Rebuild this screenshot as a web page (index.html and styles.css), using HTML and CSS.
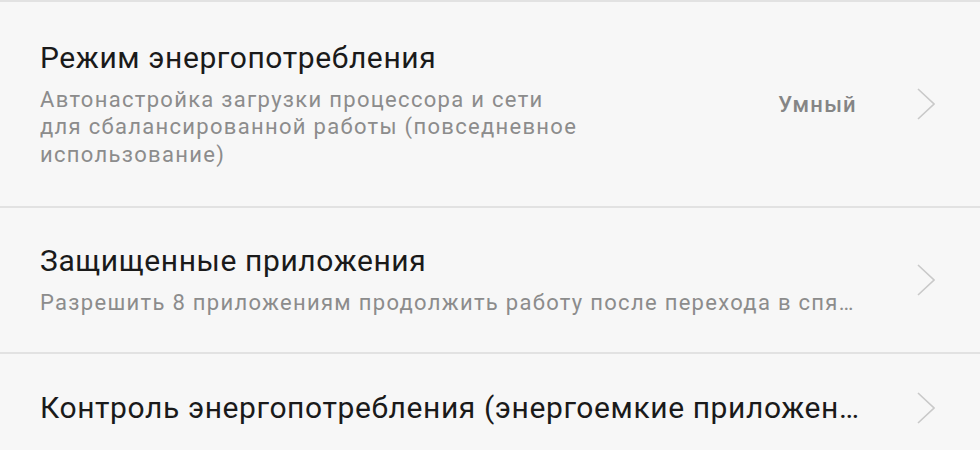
FILE: index.html
```html
<!DOCTYPE html>
<html lang="ru">
<head>
    <meta charset="UTF-8">
    <meta name="viewport" content="width=device-width, initial-scale=1.0">
    <title>Батарея</title>
    <link rel="stylesheet" href="styles.css">
</head>
<body>
    <div class="settings-list">
        <div class="item item-tall">
            <div class="item-text">
                <div class="item-title">Режим энергопотребления</div>
                <div class="item-summary summary-wrap">Автонастройка загрузки процессора и сети для сбалансированной работы (повседневное использование)</div>
            </div>
            <div class="item-value">Умный</div>
            <svg class="chevron" width="18" height="32" viewBox="0 0 18 32">
                <polyline points="1,1 17,16 1,31" fill="none" stroke="#c9c9c9" stroke-width="1.6"/>
            </svg>
        </div>

        <div class="item">
            <div class="item-text">
                <div class="item-title">Защищенные приложения</div>
                <div class="item-summary">Разрешить 8 приложениям продолжить работу после перехода в спящий режим</div>
            </div>
            <svg class="chevron" width="18" height="32" viewBox="0 0 18 32">
                <polyline points="1,1 17,16 1,31" fill="none" stroke="#c9c9c9" stroke-width="1.6"/>
            </svg>
        </div>

        <div class="item item-last">
            <div class="item-text">
                <div class="item-title">Контроль энергопотребления (энергоемкие приложения)</div>
            </div>
            <svg class="chevron" width="18" height="32" viewBox="0 0 18 32">
                <polyline points="1,1 17,16 1,31" fill="none" stroke="#c9c9c9" stroke-width="1.6"/>
            </svg>
        </div>
    </div>
</body>
</html>
```

FILE: styles.css
```css
body {
    margin: 0;
    background-color: #f7f7f7;
    font-family: Roboto, "Noto Sans", sans-serif;
    overflow: hidden;
}

.settings-list {
    border-top: 2px solid #e2e2e2;
}

.item {
    display: flex;
    align-items: center;
    padding: 0 45px 0 40px;
    height: 144px;
    border-bottom: 2px solid #e2e2e2;
}

.item-tall {
    height: 204px;
}

.item-last {
    height: 108px;
    border-bottom: none;
}

.item-text {
    flex: 1;
    min-width: 0;
    margin-right: 57px;
}

.item-title {
    font-size: 30px;
    letter-spacing: 0.6px;
    color: #1a1a1a;
    line-height: 36px;
    white-space: nowrap;
    overflow: hidden;
    text-overflow: ellipsis;
}

.item-summary {
    margin-top: 10px;
    font-size: 22px;
    letter-spacing: 1.3px;
    line-height: 27.5px;
    color: #8c8c8c;
    white-space: nowrap;
    overflow: hidden;
    text-overflow: ellipsis;
}

.summary-wrap {
    white-space: normal;
    max-width: 552px;
}

.item-value {
    font-size: 22px;
    font-weight: 500;
    letter-spacing: 1.3px;
    color: #858585;
    margin-right: 60px;
}

.chevron {
    flex: none;
    display: block;
}
```
